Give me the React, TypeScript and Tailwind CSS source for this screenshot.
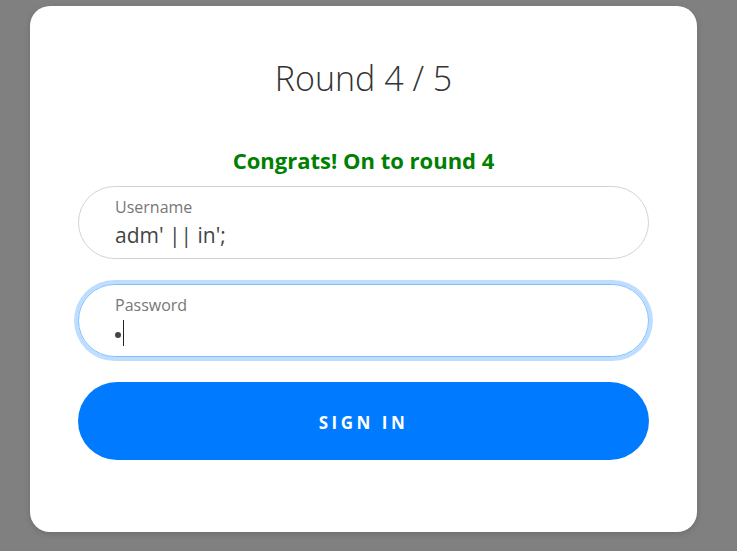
export default function App() {
  return (
    <div
      className="h-[551px] w-[737px] overflow-hidden bg-[#808080] pt-[6px] pl-[30px]"
      style={{ fontFamily: '"Open Sans", "Noto Sans", sans-serif' }}
    >
      <div className="flex h-[526px] w-[667px] flex-col rounded-[20px] bg-white px-12 shadow-[0_2px_6px_rgba(0,0,0,0.15)]">
        <h1 className="mt-[50px] text-center text-[34px] font-light leading-[44px] text-[#333]">
          Round 4 / 5
        </h1>
        <p className="mt-[46px] text-center text-[22px] font-bold leading-[28px] text-[#008000]">
          Congrats! On to round 4
        </p>

        <div className="mt-[12px] flex h-[73px] flex-col justify-center rounded-full border border-[#cfd4da] pl-[36px]">
          <span className="text-[16px] leading-[20px] text-[#777]">Username</span>
          <span className="mt-[4px] text-[21px] leading-[28px] text-[#444]">adm' || in';</span>
        </div>

        <div className="mt-[25px] flex h-[73px] flex-col justify-center rounded-full border border-[#80bdff] pl-[36px] shadow-[0_0_0_4px_rgba(0,123,255,0.25)]">
          <span className="text-[16px] leading-[20px] text-[#777]">Password</span>
          <span className="mt-[4px] flex h-[28px] items-center text-[#444]">
            <span className="mt-[4px] inline-block h-[6px] w-[6px] rounded-full bg-[#444]" />
            <span className="ml-[2px] inline-block h-[26px] w-[1px] bg-[#222]" />
          </span>
        </div>

        <button className="mt-[25px] h-[78px] rounded-full bg-[#007bff] pt-[3px] text-[17px] font-bold tracking-[3.5px] text-white">
          SIGN IN
        </button>
      </div>
    </div>
  );
}
